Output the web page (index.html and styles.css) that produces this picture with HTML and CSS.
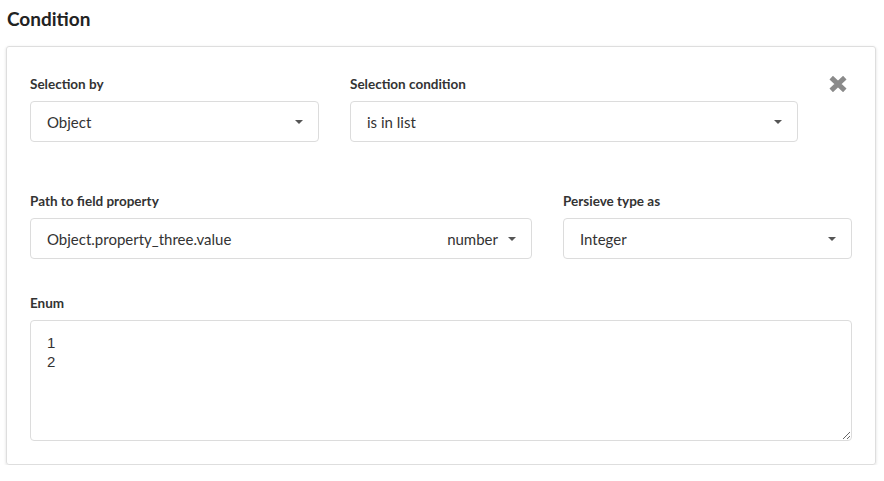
FILE: index.html
```html
<!DOCTYPE html>
<html lang="en">
<head>
<meta charset="utf-8">
<title>Condition</title>
<link rel="stylesheet" href="styles.css">
</head>
<body>
<div class="page">
  <h2 class="title">Condition</h2>
  <div class="card">
    <div class="row row-top">
      <div class="field">
        <label class="label">Selection by</label>
        <div class="select"><span class="value">Object</span><span class="caret"></span></div>
      </div>
      <div class="field">
        <label class="label">Selection condition</label>
        <div class="select"><span class="value">is in list</span><span class="caret"></span></div>
      </div>
      <div class="remove">
        <svg width="18" height="16" viewBox="0 0 18 16" aria-hidden="true">
          <path d="M2.2 1.6 L15.8 14.4 M15.8 1.6 L2.2 14.4" stroke="#8a8a8a" stroke-width="5" stroke-linecap="butt" fill="none"/>
        </svg>
      </div>
    </div>
    <div class="row row-mid">
      <div class="field">
        <label class="label">Path to field property</label>
        <div class="select"><span class="value">Object.property_three.value</span><span class="type">number</span><span class="caret"></span></div>
      </div>
      <div class="field">
        <label class="label">Persieve type as</label>
        <div class="select"><span class="value">Integer</span><span class="caret"></span></div>
      </div>
    </div>
    <div class="field">
      <label class="label">Enum</label>
      <textarea class="enum">1
2</textarea>
    </div>
  </div>
</div>
</body>
</html>
```

FILE: styles.css
```css
html, body {
  margin: 0;
  padding: 0;
  background: #ffffff;
}

body {
  font-family: "Lato", "Noto Sans", sans-serif;
  color: #333333;
}

.page {
  padding: 7px 8px 0 6px;
}

.title {
  margin: 0 0 15px 1px;
  font-size: 19px;
  line-height: 24px;
  font-weight: 700;
  color: #222222;
}

.card {
  border: 1px solid #dedede;
  border-radius: 3px;
  box-shadow: 0 1px 3px rgba(0, 0, 0, 0.14);
  padding: 28px 23px 23px 23px;
}

.row {
  display: grid;
  column-gap: 31px;
}

.row-top {
  grid-template-columns: 289px 448px 1fr;
  margin-bottom: 50px;
}

.row-mid {
  grid-template-columns: 1fr 289px;
  margin-bottom: 35px;
}

.field {
  display: flex;
  flex-direction: column;
  min-width: 0;
}

.label {
  display: block;
  font-size: 13.5px;
  line-height: 18px;
  font-weight: 700;
  color: #333333;
  margin-bottom: 8px;
}

.select {
  box-sizing: border-box;
  height: 41px;
  border: 1px solid #dcdcdc;
  border-radius: 4px;
  display: flex;
  align-items: center;
  padding: 0 15px 0 16px;
  font-size: 15px;
  color: #333333;
  background: #ffffff;
}

.value {
  flex: 1;
  white-space: nowrap;
  overflow: hidden;
}

.type {
  margin-right: 10px;
}

.caret {
  width: 0;
  height: 0;
  border-left: 4px solid transparent;
  border-right: 4px solid transparent;
  border-top: 4px solid #555555;
}

.remove {
  padding-top: 1px;
  display: flex;
  align-items: flex-start;
}

.remove svg {
  display: block;
}

.enum {
  box-sizing: border-box;
  display: block;
  width: 100%;
  height: 121px;
  border: 1px solid #dcdcdc;
  border-radius: 4px;
  padding: 12px 16px;
  margin: 0;
  font-family: "Liberation Sans", Arial, sans-serif;
  font-size: 15px;
  line-height: 19px;
  color: #333333;
  resize: vertical;
  outline: none;
}
```
